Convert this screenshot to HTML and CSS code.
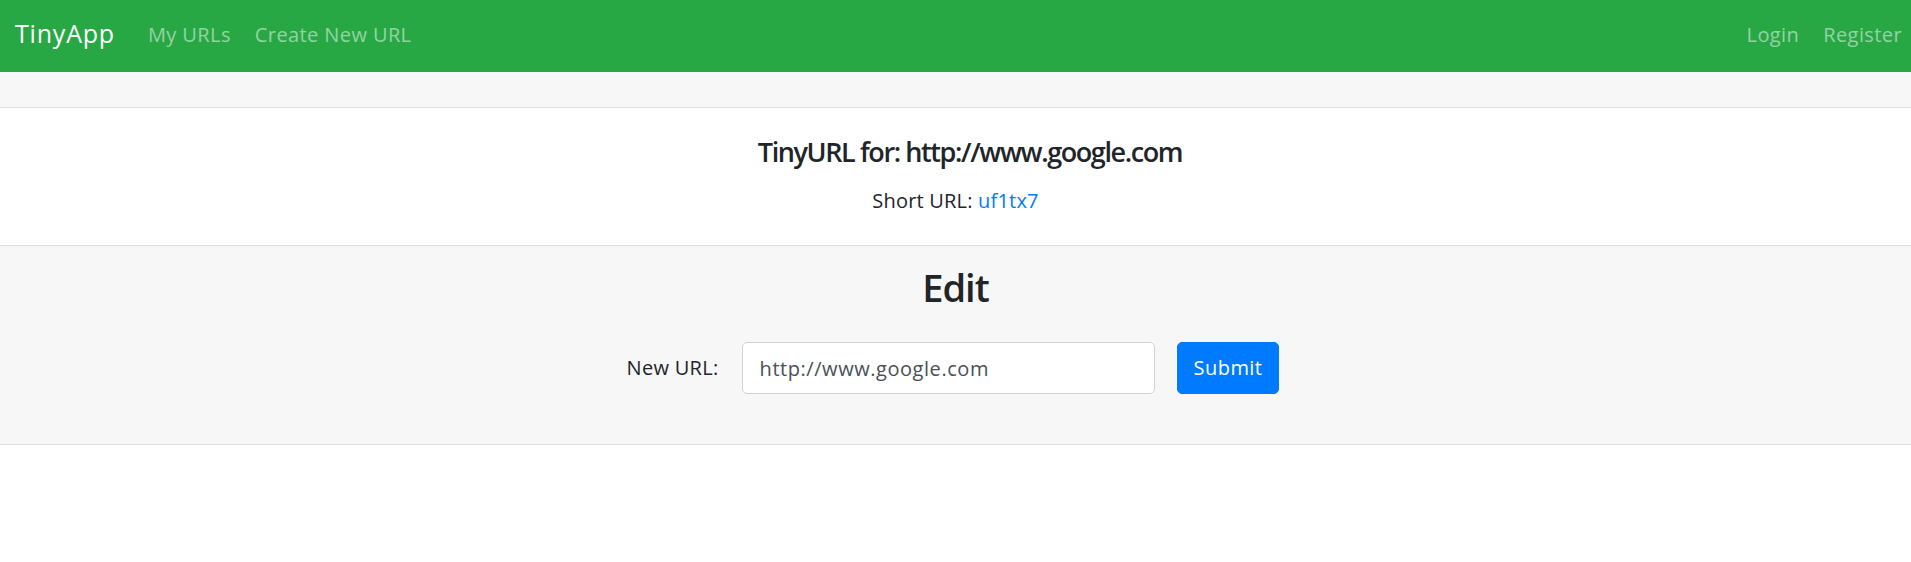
FILE: index.html
```html
<!DOCTYPE html>
<html lang="en">
<head>
<meta charset="utf-8">
<title>TinyApp</title>
<link rel="stylesheet" href="styles.css">
</head>
<body>
<nav class="navbar">
  <a class="brand" href="#">TinyApp</a>
  <ul class="nav">
    <li><a class="nav-link" href="#">My URLs</a></li>
    <li><a class="nav-link" href="#">Create New URL</a></li>
  </ul>
  <ul class="nav nav-right">
    <li><a class="nav-link" href="#">Login</a></li>
    <li><a class="nav-link last" href="#">Register</a></li>
  </ul>
</nav>
<main class="card">
  <div class="card-header"></div>
  <div class="card-body">
    <h4 class="card-title">TinyURL for: http://www.google.com</h4>
    <p class="card-text">Short URL: <a href="#">uf1tx7</a></p>
  </div>
  <div class="card-footer">
    <h2 class="edit-title">Edit</h2>
    <form class="edit-form">
      <label class="form-label" for="longURL">New URL:</label>
      <input class="form-control" id="longURL" type="text" value="http://www.google.com">
      <button class="btn" type="submit">Submit</button>
    </form>
  </div>
</main>
</body>
</html>
```
FILE: styles.css
```css
* { box-sizing: border-box; }
html, body { margin: 0; padding: 0; }
body {
  font-family: "Open Sans", "Noto Sans", sans-serif;
  font-size: 20px;
  line-height: 30px;
  letter-spacing: 0.2px;
  color: #212529;
  background: #fff;
}
a { text-decoration: none; }

.navbar {
  display: flex;
  align-items: center;
  height: 72px;
  padding: 0 0 3px 15px;
  background: #28a745;
}
.brand {
  color: #fff;
  font-size: 25px;
  line-height: 37.5px;
  letter-spacing: 0.8px;
  margin-right: 21px;
  margin-bottom: 2px;
}
.nav {
  display: flex;
  list-style: none;
  margin: 0;
  padding: 0;
}
.nav-right { margin-left: auto; }
.nav-link {
  display: block;
  padding: 0 12px;
  color: rgba(255, 255, 255, 0.5);
  font-size: 20px;
  line-height: 30px;
  letter-spacing: 0.4px;
}
.nav-link.last { padding-right: 9px; }

.card {
  display: flex;
  flex-direction: column;
}
.card-header {
  height: 36px;
  background: #f7f7f7;
  border-bottom: 1px solid #dfdfdf;
}
.card-body {
  height: 137px;
  padding-top: 28px;
  text-align: center;
}
.card-title {
  margin: 0 0 18px;
  padding-left: 29px;
  font-size: 27px;
  line-height: 32px;
  font-weight: 600;
  letter-spacing: -1.4px;
}
.card-text { margin: 0; }
.card-text a { color: #007bff; }

.card-footer {
  height: 200px;
  padding-top: 18px;
  background: #f7f7f7;
  border-top: 1px solid #dfdfdf;
  border-bottom: 1px solid #dfdfdf;
  text-align: center;
}
.edit-title {
  margin: 0;
  font-size: 38px;
  line-height: 46px;
  font-weight: 600;
  letter-spacing: -1px;
}
.edit-form {
  display: flex;
  justify-content: center;
  align-items: center;
  margin-top: 32px;
  padding-right: 5px;
}
.form-label { margin-right: 23px; letter-spacing: 0.3px; }
.form-control {
  width: 413px;
  height: 52px;
  padding: 0 17px;
  margin-right: 22px;
  border: 1px solid #ced4da;
  border-radius: 5px;
  background: #fff;
  font-family: inherit;
  font-size: 20px;
  letter-spacing: 0.55px;
  color: #495057;
}
.btn {
  height: 52px;
  padding: 0 16px;
  border: 1px solid #007bff;
  border-radius: 5px;
  background: #007bff;
  color: #fff;
  font-family: inherit;
  font-size: 20px;
  line-height: 30px;
  letter-spacing: 0.45px;
}
```
